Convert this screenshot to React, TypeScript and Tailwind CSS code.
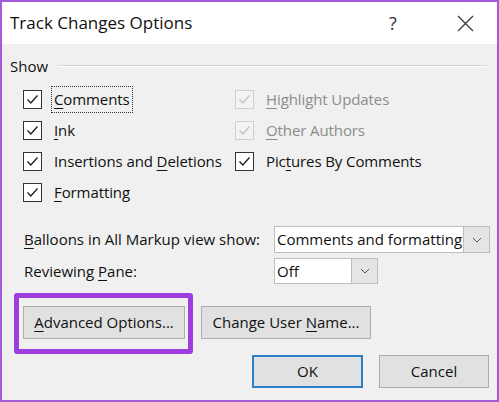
import React from "react";

const font = { fontFamily: '"Open Sans", "Noto Sans", sans-serif' };

function Check({ disabled = false }: { disabled?: boolean }) {
  return (
    <div
      className={`w-[19px] h-[19px] border flex items-center justify-center shrink-0 ${
        disabled ? "border-[#cfcfcf] bg-[#f3f3f3]" : "border-[#333333] bg-white"
      }`}
    >
      <svg width="13" height="11" viewBox="0 0 13 11">
        <path
          d="M1.5 5.5 L4.8 9 L11.5 1.5"
          fill="none"
          stroke={disabled ? "#c4c4c4" : "#222222"}
          strokeWidth="1.4"
        />
      </svg>
    </div>
  );
}

function U({ children }: { children: React.ReactNode }) {
  return <span className="underline underline-offset-[3px] decoration-1">{children}</span>;
}

function Row({
  disabled,
  children,
  focus,
}: {
  disabled?: boolean;
  children: React.ReactNode;
  focus?: boolean;
}) {
  return (
    <div className="h-[31px] flex items-center">
      <Check disabled={disabled} />
      <div
        className={`ml-[9px] px-[2px] h-[27px] flex items-center ${
          focus ? "border border-dotted border-[#333]" : "border border-transparent"
        } ${disabled ? "text-[#8c8c8c]" : "text-[#111]"}`}
      >
        {children}
      </div>
    </div>
  );
}

function Chevron() {
  return (
    <svg width="10" height="6" viewBox="0 0 10 6">
      <path d="M1 1 L5 5 L9 1" fill="none" stroke="#555" strokeWidth="1" />
    </svg>
  );
}

export default function App() {
  return (
    <div
      style={font}
      className="w-[499px] h-[402px] border-2 border-[#a55bd8] bg-[#f0f0f0] flex flex-col text-[15px] text-[#111] overflow-hidden"
    >
      {/* Title bar */}
      <div className="h-[42px] bg-white flex items-center shrink-0">
        <div className="pl-[8px] text-[17px] flex-1">Track Changes Options</div>
        <div className="w-[30px] text-[18px] text-center mr-[48px] text-[#333]">?</div>
        <div className="w-[18px] h-[18px] mr-[23px] flex items-center justify-center">
          <svg width="17" height="17" viewBox="0 0 17 17">
            <path d="M1 1 L16 16 M16 1 L1 16" stroke="#333" strokeWidth="1.2" />
          </svg>
        </div>
      </div>

      {/* Body */}
      <div className="flex flex-col pl-[8px]">
        <div className="mt-[12px] h-[20px] flex items-center">
          <span>Show</span>
          <div className="flex-1 ml-[10px] mr-[10px] flex flex-col">
            <div className="h-px bg-[#d5d5d5]" />
            <div className="h-px bg-white" />
          </div>
        </div>

        <div className="mt-[8px] ml-[13px] grid grid-cols-[212px_1fr] tracking-[-0.1px]">
          <Row focus>
            <span>
              <U>C</U>omments
            </span>
          </Row>
          <Row disabled>
            <span>
              <U>H</U>ighlight Updates
            </span>
          </Row>
          <Row>
            <span>
              <U>I</U>nk
            </span>
          </Row>
          <Row disabled>
            <span>
              <U>O</U>ther Authors
            </span>
          </Row>
          <Row>
            <span>
              Insertions and <U>D</U>eletions
            </span>
          </Row>
          <Row>
            <span>
              Pic<U>t</U>ures By Comments
            </span>
          </Row>
          <Row>
            <span>
              <U>F</U>ormatting
            </span>
          </Row>
          <div />
        </div>

        <div className="mt-[18px] ml-[14px] flex items-center h-[27px]">
          <div className="w-[250px]">
            <U>B</U>alloons in All Markup view show:
          </div>
          <div className="w-[189px] h-[27px] bg-white border border-[#bdbdbd] border-r-0 flex items-center pl-[2px]">
            Comments and formatting
          </div>
          <div className="w-[27px] h-[27px] bg-[#e5e5e5] border border-[#bdbdbd] flex items-center justify-center">
            <Chevron />
          </div>
        </div>

        <div className="mt-[5px] ml-[14px] flex items-center h-[26px]">
          <div className="w-[250px]">
            Reviewing <U>P</U>ane:
          </div>
          <div className="w-[77px] h-[26px] bg-white border border-[#bdbdbd] border-r-0 flex items-center pl-[2px]">
            Off
          </div>
          <div className="w-[27px] h-[26px] bg-[#e5e5e5] border border-[#bdbdbd] flex items-center justify-center">
            <Chevron />
          </div>
        </div>

        <div className="mt-[22px] ml-[13px] flex items-center gap-[16px]">
          <div className="relative">
            <div className="absolute left-[-9px] top-[-13px] right-[-8px] bottom-[-15px] border-[5px] border-[#9c3ee0] rounded-[3px]" />
            <button className="relative w-[162px] h-[33px] bg-[#e1e1e1] border border-[#adadad] flex items-center justify-center">
              <span>
                <U>A</U>dvanced Options...
              </span>
            </button>
          </div>
          <button className="w-[170px] h-[33px] bg-[#e1e1e1] border border-[#adadad] flex items-center justify-center">
            <span>
              Change User <U>N</U>ame...
            </span>
          </button>
        </div>

        <div className="mt-[16px] flex justify-end gap-[16px] pr-[8px]">
          <button className="w-[111px] h-[33px] bg-[#e1e1e1] border-2 border-[#2a7fc7] flex items-center justify-center">
            OK
          </button>
          <button className="w-[110px] h-[33px] bg-[#e1e1e1] border border-[#adadad] flex items-center justify-center">
            Cancel
          </button>
        </div>
      </div>
    </div>
  );
}
